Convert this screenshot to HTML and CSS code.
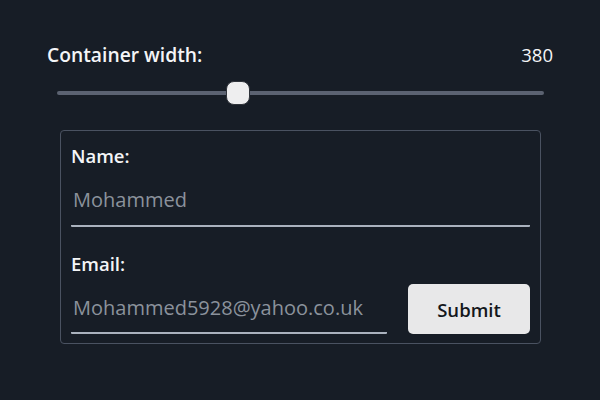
FILE: index.html
```html
<!DOCTYPE html>
<html>
<head>
<meta charset="utf-8">
<link rel="stylesheet" href="styles.css">
</head>
<body>
<div class="page">
  <div class="header">
    <span class="title">Container width:</span>
    <span class="value">380</span>
  </div>
  <input class="slider" type="range" min="240" max="624" value="380">
  <form class="card">
    <label class="label" for="name">Name:</label>
    <input class="field" id="name" type="text" value="Mohammed">
    <label class="label label-email" for="email">Email:</label>
    <div class="row">
      <input class="field field-email" id="email" type="text" value="Mohammed5928@yahoo.co.uk">
      <button class="submit" type="button">Submit</button>
    </div>
  </form>
</div>
</body>
</html>
```
FILE: styles.css
```css
html, body {
  margin: 0;
  padding: 0;
  background: #171d26;
}
body {
  font-family: "Open Sans", "Noto Sans", sans-serif;
  color: #f4f5f7;
}
.page {
  padding: 41px 47px 0 47px;
}
.header {
  display: flex;
  justify-content: space-between;
  align-items: baseline;
  height: 27px;
}
.title {
  font-size: 19.3px;
  font-weight: 600;
}
.value {
  font-size: 18.5px;
  font-weight: 400;
}
.slider {
  -webkit-appearance: none;
  appearance: none;
  display: block;
  width: 487px;
  height: 26px;
  margin: 12px 0 0 10px;
  background: transparent;
}
.slider::-webkit-slider-runnable-track {
  height: 4px;
  background: #5b6271;
  border-radius: 2px;
}
.slider::-webkit-slider-thumb {
  -webkit-appearance: none;
  width: 24px;
  height: 24px;
  margin-top: -10px;
  border-radius: 8px;
  background: #eeeeef;
  border: 1px solid #2f333a;
  box-sizing: border-box;
}
.card {
  display: flex;
  flex-direction: column;
  margin: 24px 12px 0 13px;
  padding: 14px 10px 9px 10px;
  border: 1px solid #4a5261;
  border-radius: 4px;
}
.label {
  font-size: 18.5px;
  font-weight: 600;
  line-height: 22px;
}
.label-email {
  margin-top: 26px;
}
.field {
  font-family: inherit;
  font-size: 20px;
  color: #8b929c;
  background: transparent;
  border: 0;
  border-bottom: 2px solid #aab2be;
  border-radius: 1px;
  padding: 14px 2px 12px 2px;
  margin-top: 5px;
  outline: none;
}
.row {
  display: flex;
  align-items: flex-end;
  gap: 21px;
}
.field-email {
  flex: 1;
  min-width: 0;
  padding-bottom: 11px;
}
.submit {
  width: 122px;
  height: 50px;
  flex: none;
  font-family: inherit;
  font-size: 18.5px;
  font-weight: 600;
  color: #14171c;
  background: #e8e8e9;
  border: 0;
  border-radius: 5px;
}
```
